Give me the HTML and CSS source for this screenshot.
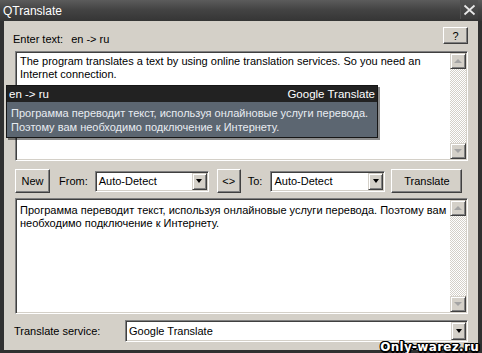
FILE: index.html
```html
<!DOCTYPE html>
<html lang="en">
<head>
    <meta charset="UTF-8">
    <title>QTranslate</title>
    <link rel="stylesheet" href="styles.css">
</head>
<body>
<div class="window">
    <div class="titlebar">
        <span class="title">QTranslate</span>
        <span class="close">
            <svg width="13" height="12" viewBox="0 0 13 12"><path d="M1.5 1.5 L11.5 10.5 M11.5 1.5 L1.5 10.5" stroke="#e8e8e8" stroke-width="1.8" fill="none"/></svg>
        </span>
    </div>

    <div class="client">
        <div class="head">
            <span class="label">Enter text:<span class="dir">en -&gt; ru</span></span>
            <button class="btn help">?</button>
        </div>

        <div class="textbox source">
            <div class="text">The program translates a text by using online translation services. So you need an<br>Internet connection.</div>
            <div class="scrollbar">
                <div class="arrow"><span class="tri up"></span></div>
                <div class="track"></div>
                <div class="arrow"><span class="tri down"></span></div>
            </div>
        </div>

        <div class="popup">
            <div class="popup-head">
                <span>en -&gt; ru</span>
                <span>Google Translate</span>
            </div>
            <div class="popup-body">Программа переводит текст, используя онлайновые услуги перевода.<br>Поэтому вам необходимо подключение к Интернету.</div>
        </div>

        <div class="toolbar">
            <button class="btn new">New</button>
            <span class="from">From:</span>
            <div class="combo lang">
                <span class="value">Auto-Detect</span>
                <span class="drop"><span class="tri down dark"></span></span>
            </div>
            <button class="btn swap">&lt;&gt;</button>
            <span class="to">To:</span>
            <div class="combo lang to-combo">
                <span class="value">Auto-Detect</span>
                <span class="drop"><span class="tri down dark"></span></span>
            </div>
            <button class="btn go">Translate</button>
        </div>

        <div class="textbox result">
            <div class="text">Программа переводит текст, используя онлайновые услуги перевода. Поэтому вам<br>необходимо подключение к Интернету.</div>
            <div class="scrollbar">
                <div class="arrow"><span class="tri up"></span></div>
                <div class="track"></div>
                <div class="arrow"><span class="tri down"></span></div>
            </div>
        </div>

        <div class="footer">
            <span class="service-label">Translate service:</span>
            <div class="combo service">
                <span class="value">Google Translate</span>
                <span class="drop"><span class="tri down dark"></span></span>
            </div>
        </div>
    </div>

    <div class="watermark">Only-warez.ru</div>
</div>
</body>
</html>
```

FILE: styles.css
```css
* {
    box-sizing: border-box;
}
body {
    margin: 0;
    background: #2f2f2f;
    font-family: "Liberation Sans", Arial, sans-serif;
    font-size: 11px;
    color: #000;
}
.window {
    position: relative;
    width: 482px;
    height: 353px;
    display: flex;
    flex-direction: column;
    background: #303030;
    overflow: hidden;
}
.titlebar {
    height: 21px;
    display: flex;
    justify-content: space-between;
    align-items: center;
    padding: 0 4px 0 3px;
    background: linear-gradient(#5c5c5c, #444 45%, #353535);
    color: #fff;
    font-size: 12px;
}
.close {
    width: 18px;
    height: 19px;
    align-self: flex-start;
    display: flex;
    align-items: center;
    justify-content: center;
    border-left: 1px solid #505050;
    background: linear-gradient(#545454, #3c3c3c);
}
.client {
    flex: 1;
    position: relative;
    margin: 0 4px 3px 4px;
    padding: 6px 10px 8px 11px;
    background: #d4d0c8;
    display: flex;
    flex-direction: column;
}

/* classic controls */
.btn {
    background: #d4d0c8;
    border: 1px solid;
    border-color: #fff #404040 #404040 #fff;
    box-shadow: inset -1px -1px #808080;
    font: inherit;
    font-size: 11px;
    color: #000;
    padding: 0;
}
.textbox {
    display: flex;
    background: #fff;
    border: 1px solid;
    border-color: #808080 #fff #fff #808080;
    box-shadow: inset 1px 1px #404040, inset -1px -1px #d4d0c8;
    padding: 1px;
}
.textbox .text {
    flex: 1;
    padding: 2px 3px;
    line-height: 13px;
}
.scrollbar {
    width: 16px;
    display: flex;
    flex-direction: column;
}
.track {
    flex: 1;
    background: repeating-conic-gradient(#fff 0 25%, #d4d0c8 0 50%) 0 0 / 2px 2px;
}
.arrow, .drop {
    width: 16px;
    height: 16px;
    display: flex;
    align-items: center;
    justify-content: center;
    background: #d4d0c8;
    border: 1px solid;
    border-color: #d4d0c8 #404040 #404040 #d4d0c8;
    box-shadow: inset 1px 1px #fff, inset -1px -1px #808080;
}
.tri {
    width: 0;
    height: 0;
    border-left: 4px solid transparent;
    border-right: 4px solid transparent;
}
.tri.up {
    border-bottom: 4px solid #a4a4a4;
}
.tri.down {
    border-top: 4px solid #a4a4a4;
}
.tri.dark {
    border-left-width: 3.5px;
    border-right-width: 3.5px;
    border-top-color: #000;
}
.combo {
    display: flex;
    height: 21px;
    background: #fff;
    border: 1px solid;
    border-color: #808080 #fff #fff #808080;
    box-shadow: inset 1px 1px #404040, inset -1px -1px #d4d0c8;
    padding: 1px;
}
.combo .value {
    flex: 1;
    padding-left: 2px;
    line-height: 17px;
}
.combo .drop {
    width: 15px;
    height: 17px;
}

/* header */
.head {
    height: 24px;
    display: flex;
    justify-content: space-between;
    align-items: flex-start;
}
.head .label {
    margin-left: -2px;
    padding-top: 6px;
    line-height: 13px;
}
.head .dir {
    margin-left: 8px;
}
.help {
    width: 25px;
    height: 17px;
}

.source {
    height: 110px;
}

/* hint popup */
.popup {
    position: absolute;
    left: 2px;
    top: 64px;
    width: 372px;
    border: 1px solid #161616;
    box-shadow: 2px 2px 0 rgba(0, 0, 0, 0.45);
}
.popup-head {
    height: 16px;
    display: flex;
    justify-content: space-between;
    align-items: center;
    padding: 0 2px;
    background: #222;
    color: #fff;
    font-size: 11.5px;
}
.popup-body {
    background: #5c6671;
    color: #e8ecf1;
    padding: 4px 4px 3px 4px;
    line-height: 14px;
}

/* language row */
.toolbar {
    height: 24px;
    margin-top: 8px;
    display: flex;
    align-items: center;
}
.new {
    width: 35px;
    height: 24px;
}
.from {
    margin: 0 7px 0 9px;
}
.lang {
    width: 114px;
}
.swap {
    width: 24px;
    height: 24px;
    margin-left: 8px;
}
.to {
    margin: 0 8px 0 7px;
}
.to-combo {
    width: 115px;
}
.go {
    width: 71px;
    height: 24px;
    margin-left: 6px;
}

.result {
    height: 116px;
    margin-top: 5px;
}
.result .text {
    padding-top: 4px;
}

/* service row */
.footer {
    height: 22px;
    margin-top: 6px;
    display: flex;
    align-items: center;
}
.service-label {
    width: 111px;
    margin-left: -1px;
}
.service {
    flex: 1;
    height: 22px;
}
.service .value {
    line-height: 18px;
}
.service .drop {
    height: 18px;
}

.watermark {
    position: absolute;
    right: 3px;
    bottom: -1px;
    font-family: "DejaVu Sans", sans-serif;
    font-weight: bold;
    font-size: 12px;
    letter-spacing: 0.3px;
    color: #fff;
    text-shadow: 1px 0 #000, -1px 0 #000, 0 1px #000, 0 -1px #000,
                 1px 1px #000, -1px -1px #000, 1px -1px #000, -1px 1px #000,
                 2px 0 #000, 0 2px #000;
}
```
